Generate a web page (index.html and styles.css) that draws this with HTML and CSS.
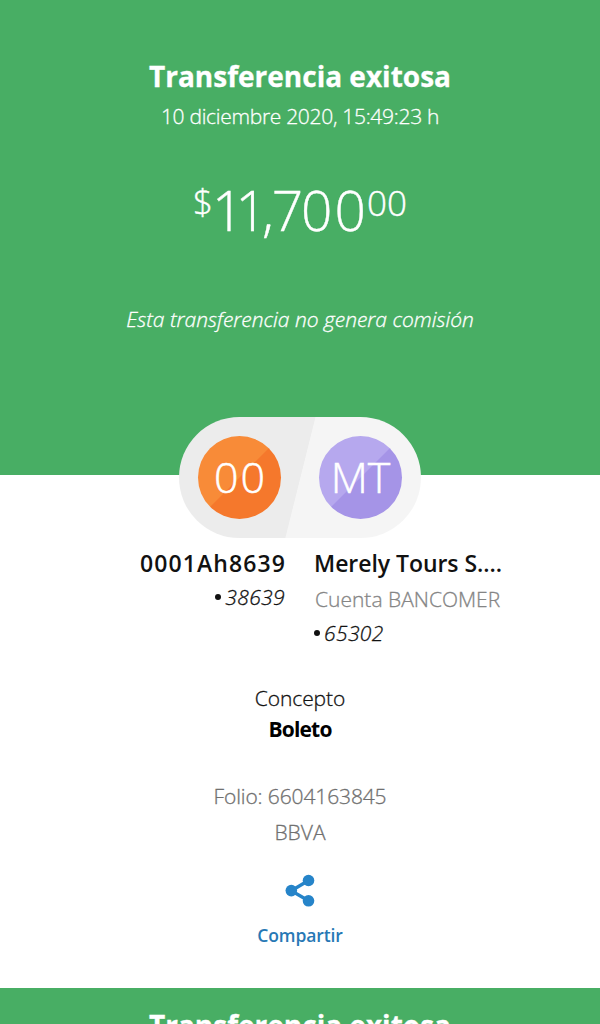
FILE: index.html
```html
<!DOCTYPE html>
<html lang="es">
<head>
<meta charset="utf-8">
<title>Transferencia exitosa</title>
<link rel="stylesheet" href="styles.css">
</head>
<body>
<main class="receipt">
  <header class="hero">
    <h1 class="title">Transferencia exitosa</h1>
    <p class="date">10 diciembre 2020, 15:49:23 h</p>
    <p class="amount"><span class="currency">$</span><span class="whole"><span class="ones">11</span>,7<span class="zeros">00</span></span><span class="cents">00</span></p>
    <p class="fee">Esta transferencia no genera comisión</p>
  </header>
  <div class="pill">
    <div class="avatar avatar-from"><span>00</span></div>
    <div class="avatar avatar-to"><span>MT</span></div>
  </div>
  <section class="parties">
    <div class="party party-from">
      <p class="name name-from">0001Ah8639</p>
      <p class="account account-from"><i class="dot"></i><em>38639</em></p>
    </div>
    <div class="party party-to">
      <p class="name name-to">Merely Tours S....</p>
      <p class="bank">Cuenta BANCOMER</p>
      <p class="account"><i class="dot"></i><em>65302</em></p>
    </div>
  </section>
  <section class="details">
    <p class="label">Concepto</p>
    <p class="concept">Boleto</p>
    <p class="folio">Folio: 6604163845</p>
    <p class="issuer">BBVA</p>
  </section>
  <div class="share">
    <svg class="share-icon" width="30" height="34" viewBox="0 0 30 34">
      <path d="M23.5 6.5 6.3 16.8l17.2 10" fill="none" stroke="#2684c9" stroke-width="3.4"/>
      <circle cx="23.5" cy="6.5" r="5.8"/><circle cx="6.3" cy="16.6" r="5.8"/><circle cx="23.5" cy="26.8" r="5.8"/>
    </svg>
    <span class="share-text">Compartir</span>
  </div>
</main>
<div class="next"><h1 class="title">Transferencia exitosa</h1></div>
</body>
</html>
```
FILE: styles.css
```css
* { box-sizing: border-box; }
body { margin: 0; height: 1024px; overflow: hidden; background: #fff; font-family: "Open Sans", "Noto Sans", sans-serif; font-weight: 300; color: #111; }
h1, p { margin: 0; white-space: nowrap; }
.date, .fee, .account, .bank, .label, .folio, .issuer { -webkit-text-stroke: 0.3px currentColor; }
.receipt { height: 988px; display: flex; flex-direction: column; }
.hero { height: 475px; flex: none; padding-top: 56px; background: #48ae64; color: #fff; text-align: center; }
.title { font-size: 28px; line-height: 40px; font-weight: 700; -webkit-text-stroke: 0.3px currentColor; }
.date { font-size: 21px; line-height: 30px; margin-top: 5px; letter-spacing: -0.3px; }
.amount { display: flex; justify-content: center; align-items: flex-start; height: 60px; margin-top: 49px; -webkit-text-stroke: 0.4px currentColor; }
.whole { font-size: 55px; line-height: 60px; letter-spacing: -2px; }
.ones { letter-spacing: -8px; margin-left: -1px; margin-right: 3px; }
.zeros { letter-spacing: 2px; }
.currency { font-size: 35px; line-height: 44px; }
.cents { font-size: 35px; line-height: 46px; margin-left: -1px; }
.fee { font-size: 21px; line-height: 30px; margin-top: 64px; font-style: italic; }
.pill { position: relative; z-index: 1; width: 242px; height: 121px; flex: none; align-self: center; margin-top: -58px; border-radius: 61px; padding: 0 19px; display: flex; align-items: center; justify-content: space-between; background: linear-gradient(104deg, #ececec 50%, #f5f5f5 50.3%); }
.avatar { width: 83px; height: 83px; border-radius: 50%; display: flex; align-items: center; justify-content: center; color: #fff; font-size: 43px; line-height: 50px; padding-bottom: 1px; -webkit-text-stroke: 0.5px currentColor; }
.avatar-from { letter-spacing: 2px; padding-left: 2px; background: linear-gradient(135deg, #f88b38 49.5%, #f5782c 50.5%); }
.avatar-to { background: linear-gradient(135deg, #b6a8ee 49.5%, #a594e7 50.5%); }
.parties { display: grid; grid-template-columns: 285px 285px; column-gap: 30px; padding-top: 8px; height: 136px; flex: none; }
.party-from { display: flex; flex-direction: column; align-items: flex-end; }
.name { font-size: 23px; line-height: 34px; font-weight: 600; }
.name-from { letter-spacing: 1.1px; margin-right: -1px; }
.name-to { letter-spacing: -0.05px; margin-left: -1px; }
.account { display: flex; align-items: center; gap: 4px; font-size: 21px; line-height: 34px; letter-spacing: 0.4px; }
.dot { width: 6px; height: 6px; border-radius: 50%; background: #111; }
.party-to .account { margin-top: -1px; }
.party-to .dot { margin-left: -1px; }
.bank { font-size: 21px; line-height: 36px; padding-top: 1px; color: #858585; }
.details { text-align: center; padding-top: 9px; font-size: 21px; line-height: 30px; }
.label { letter-spacing: -0.1px; }
.concept { font-weight: 700; color: #000; letter-spacing: -0.8px; padding-top: 1px; height: 30px; }
.folio, .issuer { color: #707070; line-height: 36px; }
.folio { margin-top: 35px; letter-spacing: -0.12px; }
.share { display: flex; flex-direction: column; align-items: center; margin-top: 24px; }
.share-icon { fill: #2684c9; }
.share-text { margin-top: 15px; font-size: 17.5px; line-height: 24px; font-weight: 600; color: #2778b5; letter-spacing: -0.1px; }
.next { height: 36px; overflow: hidden; padding-top: 17px; background: #48ae64; color: #fff; text-align: center; }
```
